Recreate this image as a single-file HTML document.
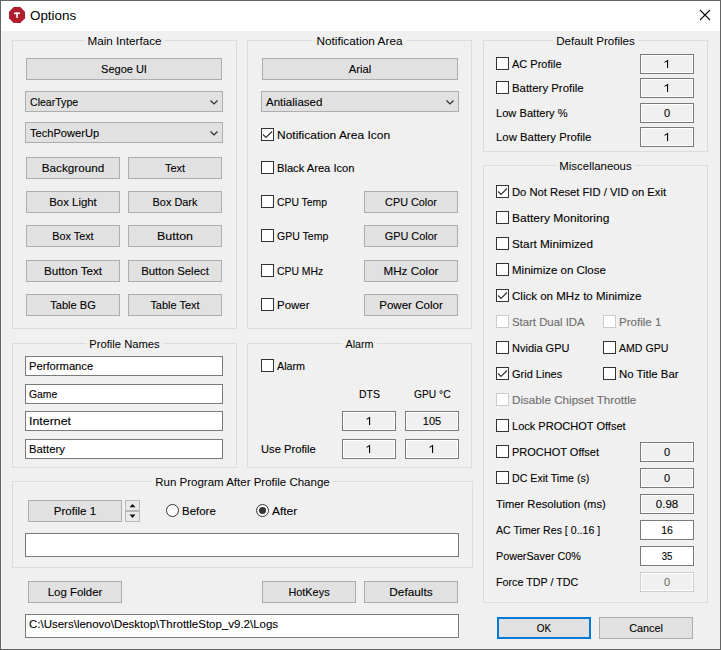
<!DOCTYPE html><html><head><meta charset="utf-8"><style>
*{margin:0;padding:0;box-sizing:border-box}
html,body{width:721px;height:650px;overflow:hidden;background:#f0f0f0}
body{position:relative;font-family:"Liberation Sans",sans-serif;font-size:12px}
#win{position:absolute;left:0;top:0;width:721px;height:650px;border:1px solid #646464;background:#f0f0f0}
.title{position:absolute;left:1px;top:1px;width:719px;height:30px;background:#fff}
.ab{position:absolute}
.t{position:absolute;font-size:11px;line-height:14px;white-space:nowrap;color:#000;transform-origin:0 0;-webkit-text-stroke:0.1px #000}
.c{transform-origin:50% 0}
.c{text-align:center}
.dt{color:#6d6d6d;-webkit-text-stroke:0.1px #6d6d6d}
.dt2{color:#6d6d6d;-webkit-text-stroke:0.1px #6d6d6d}
.grp{position:absolute;border:1px solid #dcdcdc}
.gt{position:absolute;text-align:center;font-size:11px;line-height:14px;white-space:nowrap;transform-origin:50% 0}
.gt span{background:#f0f0f0;padding:0 3px}
.btn{position:absolute;background:#e1e1e1;border:1px solid #adadad}
.ok{border:2px solid #0078d7}
.chk{position:absolute;background:#fff;border:1px solid #333}
.chk.dis{border-color:#cccccc;background:#fff}
.edit{position:absolute;background:#fff;border:1px solid #7a7a7a}
.stat{position:absolute;background:#f0f0f0;border:1px solid #7a7a7a;box-shadow:inset 0 0 0 1px #fff}
.fdis{position:absolute;background:#f0f0f0;border:1px solid #cccccc;box-shadow:inset 0 0 0 1px #fff}
.spin{position:absolute;background:#e9e9e9;border:1px solid #b9b9b9}
.radio{position:absolute;width:13px;height:13px;border:1px solid #333;border-radius:50%;background:#fff}
.radio .dot{position:absolute;left:2px;top:2px;width:7px;height:7px;border-radius:50%;background:#333}
</style></head><body><div id="win"></div><div class="title"></div>
<svg class="ab" style="left:9px;top:7px" width="16" height="16" viewBox="0 0 16 16"><polygon points="4.7,0 11.3,0 16,4.7 16,11.3 11.3,16 4.7,16 0,11.3 0,4.7" fill="#b01e2e"/><rect x="5" y="5.5" width="6" height="1.6" fill="#fff"/><rect x="7.2" y="5.5" width="1.6" height="5.4" fill="#fff"/></svg>
<div class="t" style="left:30px;top:8px;font-size:13px;line-height:16px;transform:scaleX(1.03);-webkit-text-stroke:0">Options</div>
<svg class="ab" style="left:699px;top:9px" width="12" height="12"><path d="M1,1 L11,11 M11,1 L1,11" stroke="#111" stroke-width="1.1"/></svg>
<div class="grp" style="left:12px;top:40px;width:225px;height:289px;"></div>
<div class="gt" style="left:12px;width:225px;top:34px;transform:scaleX(1.0609);"><span style="">Main Interface</span></div>
<div class="btn" style="left:26px;top:58px;width:196px;height:22px;"></div>
<div class="t c " style="left:26px;width:196px;top:62px;transform:scaleX(1.0000);">Segoe UI</div>
<div class="btn" style="left:25px;top:91px;width:198px;height:21px;"></div>
<div class="t " style="left:30px;top:95px;transform:scaleX(0.9600);">ClearType</div>
<svg class="ab" style="left:209px;top:98px" width="12" height="9"><polyline points="1.5,2.5 5,5.9 8.5,2.5" fill="none" stroke="#333" stroke-width="1.3"/></svg>
<div class="btn" style="left:25px;top:122px;width:198px;height:21px;"></div>
<div class="t " style="left:30px;top:126px;transform:scaleX(1.0088);">TechPowerUp</div>
<svg class="ab" style="left:209px;top:129px" width="12" height="9"><polyline points="1.5,2.5 5,5.9 8.5,2.5" fill="none" stroke="#333" stroke-width="1.3"/></svg>
<div class="btn" style="left:26px;top:157px;width:94px;height:22px;"></div>
<div class="t c " style="left:26px;width:94px;top:161px;transform:scaleX(1.0621);">Background</div>
<div class="btn" style="left:128px;top:157px;width:94px;height:22px;"></div>
<div class="t c " style="left:128px;width:94px;top:161px;transform:scaleX(1.0000);">Text</div>
<div class="btn" style="left:26px;top:191px;width:94px;height:22px;"></div>
<div class="t c " style="left:26px;width:94px;top:195px;transform:scaleX(1.0356);">Box Light</div>
<div class="btn" style="left:128px;top:191px;width:94px;height:22px;"></div>
<div class="t c " style="left:128px;width:94px;top:195px;transform:scaleX(0.9911);">Box Dark</div>
<div class="btn" style="left:26px;top:225px;width:94px;height:22px;"></div>
<div class="t c " style="left:26px;width:94px;top:229px;transform:scaleX(0.9829);">Box Text</div>
<div class="btn" style="left:128px;top:225px;width:94px;height:22px;"></div>
<div class="t c " style="left:128px;width:94px;top:229px;transform:scaleX(1.1290);">Button</div>
<div class="btn" style="left:26px;top:260px;width:94px;height:22px;"></div>
<div class="t c " style="left:26px;width:94px;top:264px;transform:scaleX(1.0611);">Button Text</div>
<div class="btn" style="left:128px;top:260px;width:94px;height:22px;"></div>
<div class="t c " style="left:128px;width:94px;top:264px;transform:scaleX(1.0338);">Button Select</div>
<div class="btn" style="left:26px;top:294px;width:94px;height:22px;"></div>
<div class="t c " style="left:26px;width:94px;top:298px;transform:scaleX(1.0068);">Table BG</div>
<div class="btn" style="left:128px;top:294px;width:94px;height:22px;"></div>
<div class="t c " style="left:128px;width:94px;top:298px;transform:scaleX(0.9980);">Table Text</div>
<div class="grp" style="left:247px;top:40px;width:225px;height:289px;"></div>
<div class="gt" style="left:247px;width:225px;top:34px;transform:scaleX(1.0750);"><span style="">Notification Area</span></div>
<div class="btn" style="left:262px;top:58px;width:196px;height:22px;"></div>
<div class="t c " style="left:262px;width:196px;top:62px;transform:scaleX(1.0227);">Arial</div>
<div class="btn" style="left:261px;top:91px;width:198px;height:21px;"></div>
<div class="t " style="left:266px;top:95px;transform:scaleX(1.0481);">Antialiased</div>
<svg class="ab" style="left:445px;top:98px" width="12" height="9"><polyline points="1.5,2.5 5,5.9 8.5,2.5" fill="none" stroke="#333" stroke-width="1.3"/></svg>
<div class="chk" style="left:261px;top:128px;width:13px;height:13px;"><svg width="13" height="13" style="position:absolute;left:-1px;top:-1px"><polyline points="2,6.5 5,9.5 11,3.5" fill="none" stroke="#333" stroke-width="1.2"/></svg></div>
<div class="t " style="left:277px;top:128px;transform:scaleX(1.0882);">Notification Area Icon</div>
<div class="chk" style="left:261px;top:161px;width:13px;height:13px;"></div>
<div class="t " style="left:277px;top:161px;transform:scaleX(1.0133);">Black Area Icon</div>
<div class="chk" style="left:261px;top:195px;width:13px;height:13px;"></div>
<div class="t " style="left:277px;top:195px;transform:scaleX(0.9434);">CPU Temp</div>
<div class="btn" style="left:364px;top:191px;width:94px;height:22px;"></div>
<div class="t c " style="left:364px;width:94px;top:195px;transform:scaleX(0.9846);">CPU Color</div>
<div class="chk" style="left:261px;top:229px;width:13px;height:13px;"></div>
<div class="t " style="left:277px;top:229px;transform:scaleX(0.9566);">GPU Temp</div>
<div class="btn" style="left:364px;top:225px;width:94px;height:22px;"></div>
<div class="t c " style="left:364px;width:94px;top:229px;transform:scaleX(0.9906);">GPU Color</div>
<div class="chk" style="left:261px;top:264px;width:13px;height:13px;"></div>
<div class="t " style="left:277px;top:264px;transform:scaleX(0.9449);">CPU MHz</div>
<div class="btn" style="left:364px;top:260px;width:94px;height:22px;"></div>
<div class="t c " style="left:364px;width:94px;top:264px;transform:scaleX(1.0588);">MHz Color</div>
<div class="chk" style="left:261px;top:298px;width:13px;height:13px;"></div>
<div class="t " style="left:277px;top:298px;transform:scaleX(1.0433);">Power</div>
<div class="btn" style="left:364px;top:294px;width:94px;height:22px;"></div>
<div class="t c " style="left:364px;width:94px;top:298px;transform:scaleX(1.0500);">Power Color</div>
<div class="grp" style="left:483px;top:40px;width:225px;height:112px;"></div>
<div class="gt" style="left:483px;width:225px;top:34px;transform:scaleX(1.0541);"><span style="">Default Profiles</span></div>
<div class="chk" style="left:496px;top:57px;width:13px;height:13px;"></div>
<div class="t " style="left:512px;top:57px;transform:scaleX(1.0000);">AC Profile</div>
<div class="stat" style="left:640px;top:54px;width:54px;height:20px;"></div>
<svg class="ab" style="left:664px;top:60px" width="5" height="8"><rect x="3" y="0" width="1.1" height="8" fill="#000"/><path d="M0.6,2.4 L3.4,0.6" stroke="#000" stroke-width="1.1"/></svg>
<div class="chk" style="left:496px;top:81px;width:13px;height:13px;"></div>
<div class="t " style="left:512px;top:81px;transform:scaleX(1.0353);">Battery Profile</div>
<div class="stat" style="left:640px;top:78px;width:54px;height:20px;"></div>
<svg class="ab" style="left:664px;top:84px" width="5" height="8"><rect x="3" y="0" width="1.1" height="8" fill="#000"/><path d="M0.6,2.4 L3.4,0.6" stroke="#000" stroke-width="1.1"/></svg>
<div class="t " style="left:496px;top:106px;transform:scaleX(1.0100);">Low Battery %</div>
<div class="stat" style="left:640px;top:103px;width:54px;height:20px;"></div>
<div class="t c " style="left:640px;width:54px;top:106px;">0</div>
<div class="t " style="left:496px;top:130px;transform:scaleX(1.0330);">Low Battery Profile</div>
<div class="stat" style="left:640px;top:127px;width:54px;height:20px;"></div>
<svg class="ab" style="left:664px;top:133px" width="5" height="8"><rect x="3" y="0" width="1.1" height="8" fill="#000"/><path d="M0.6,2.4 L3.4,0.6" stroke="#000" stroke-width="1.1"/></svg>
<div class="grp" style="left:483px;top:165px;width:225px;height:438px;"></div>
<div class="gt" style="left:483px;width:225px;top:159px;transform:scaleX(1.0377);"><span style="">Miscellaneous</span></div>
<div class="chk" style="left:496px;top:185px;width:13px;height:13px;"><svg width="13" height="13" style="position:absolute;left:-1px;top:-1px"><polyline points="2,6.5 5,9.5 11,3.5" fill="none" stroke="#333" stroke-width="1.2"/></svg></div>
<div class="t " style="left:512px;top:185px;transform:scaleX(1.0200);">Do Not Reset FID / VID on Exit</div>
<div class="chk" style="left:496px;top:211px;width:13px;height:13px;"></div>
<div class="t " style="left:512px;top:211px;transform:scaleX(1.0909);">Battery Monitoring</div>
<div class="chk" style="left:496px;top:237px;width:13px;height:13px;"></div>
<div class="t " style="left:512px;top:237px;transform:scaleX(1.0676);">Start Minimized</div>
<div class="chk" style="left:496px;top:263px;width:13px;height:13px;"></div>
<div class="t " style="left:512px;top:263px;transform:scaleX(1.0449);">Minimize on Close</div>
<div class="chk" style="left:496px;top:289px;width:13px;height:13px;"><svg width="13" height="13" style="position:absolute;left:-1px;top:-1px"><polyline points="2,6.5 5,9.5 11,3.5" fill="none" stroke="#333" stroke-width="1.2"/></svg></div>
<div class="t " style="left:512px;top:289px;transform:scaleX(1.0488);">Click on MHz to Minimize</div>
<div class="chk dis" style="left:496px;top:315px;width:13px;height:13px;"></div>
<div class="t dt" style="left:512px;top:315px;transform:scaleX(1.0333);">Start Dual IDA</div>
<div class="chk dis" style="left:603px;top:315px;width:13px;height:13px;"></div>
<div class="t dt" style="left:619px;top:315px;transform:scaleX(1.0513);">Profile 1</div>
<div class="chk" style="left:496px;top:341px;width:13px;height:13px;"></div>
<div class="t " style="left:512px;top:341px;transform:scaleX(1.0000);">Nvidia GPU</div>
<div class="chk" style="left:603px;top:341px;width:13px;height:13px;"></div>
<div class="t " style="left:619px;top:341px;transform:scaleX(0.9608);">AMD GPU</div>
<div class="chk" style="left:496px;top:367px;width:13px;height:13px;"><svg width="13" height="13" style="position:absolute;left:-1px;top:-1px"><polyline points="2,6.5 5,9.5 11,3.5" fill="none" stroke="#333" stroke-width="1.2"/></svg></div>
<div class="t " style="left:512px;top:367px;transform:scaleX(1.0000);">Grid Lines</div>
<div class="chk" style="left:603px;top:367px;width:13px;height:13px;"></div>
<div class="t " style="left:619px;top:367px;transform:scaleX(1.0357);">No Title Bar</div>
<div class="chk dis" style="left:496px;top:393px;width:13px;height:13px;"></div>
<div class="t dt" style="left:512px;top:393px;transform:scaleX(1.0603);">Disable Chipset Throttle</div>
<div class="chk" style="left:496px;top:419px;width:13px;height:13px;"></div>
<div class="t " style="left:512px;top:419px;transform:scaleX(1.0027);">Lock PROCHOT Offset</div>
<div class="chk" style="left:496px;top:445px;width:13px;height:13px;"></div>
<div class="t " style="left:512px;top:445px;transform:scaleX(1.0000);">PROCHOT Offset</div>
<div class="stat" style="left:640px;top:442px;width:54px;height:20px;"></div>
<div class="t c " style="left:640px;width:54px;top:445px;">0</div>
<div class="chk" style="left:496px;top:471px;width:13px;height:13px;"></div>
<div class="t " style="left:512px;top:471px;transform:scaleX(0.9658);">DC Exit Time (s)</div>
<div class="stat" style="left:640px;top:468px;width:54px;height:20px;"></div>
<div class="t c " style="left:640px;width:54px;top:471px;">0</div>
<div class="t " style="left:496px;top:497px;transform:scaleX(1.0187);">Timer Resolution (ms)</div>
<div class="stat" style="left:640px;top:494px;width:54px;height:20px;"></div>
<div class="t c " style="left:640px;width:54px;top:497px;transform:scaleX(1.0500);">0.98</div>
<div class="t " style="left:496px;top:523px;transform:scaleX(0.9630);">AC Timer Res [ 0..16 ]</div>
<div class="edit" style="left:640px;top:520px;width:54px;height:20px;"></div>
<div class="t c " style="left:640px;width:54px;top:523px;transform:scaleX(0.9545);">16</div>
<div class="t " style="left:496px;top:549px;transform:scaleX(0.9767);">PowerSaver C0%</div>
<div class="edit" style="left:640px;top:546px;width:54px;height:20px;"></div>
<div class="t c " style="left:640px;width:54px;top:549px;transform:scaleX(0.8750);">35</div>
<div class="t " style="left:496px;top:575px;transform:scaleX(0.9759);">Force TDP / TDC</div>
<div class="fdis" style="left:640px;top:572px;width:54px;height:20px;"></div>
<div class="t c dt2" style="left:640px;width:54px;top:575px;">0</div>
<div class="grp" style="left:12px;top:343px;width:225px;height:125px;"></div>
<div class="gt" style="left:12px;width:225px;top:337px;transform:scaleX(1.0191);"><span style="">Profile Names</span></div>
<div class="edit" style="left:25px;top:356px;width:198px;height:20px;"></div>
<div class="t " style="left:29px;top:359px;transform:scaleX(1.0194);">Performance</div>
<div class="edit" style="left:25px;top:384px;width:198px;height:20px;"></div>
<div class="t " style="left:29px;top:387px;transform:scaleX(0.9433);">Game</div>
<div class="edit" style="left:25px;top:411px;width:198px;height:20px;"></div>
<div class="t " style="left:29px;top:414px;transform:scaleX(1.1278);">Internet</div>
<div class="edit" style="left:25px;top:439px;width:198px;height:20px;"></div>
<div class="t " style="left:29px;top:442px;transform:scaleX(1.0294);">Battery</div>
<div class="grp" style="left:247px;top:343px;width:225px;height:125px;"></div>
<div class="gt" style="left:247px;width:225px;top:337px;transform:scaleX(0.9759);"><span style="">Alarm</span></div>
<div class="chk" style="left:261px;top:359px;width:13px;height:13px;"></div>
<div class="t " style="left:277px;top:359px;transform:scaleX(0.9759);">Alarm</div>
<div class="t " style="left:359px;top:387px;transform:scaleX(0.9524);">DTS</div>
<div class="t " style="left:414px;top:387px;transform:scaleX(0.9333);">GPU °C</div>
<div class="stat" style="left:342px;top:411px;width:54px;height:20px;"></div>
<svg class="ab" style="left:366px;top:417px" width="5" height="8"><rect x="3" y="0" width="1.1" height="8" fill="#000"/><path d="M0.6,2.4 L3.4,0.6" stroke="#000" stroke-width="1.1"/></svg>
<div class="stat" style="left:405px;top:411px;width:54px;height:20px;"></div>
<div class="t c " style="left:405px;width:54px;top:414px;">105</div>
<div class="t " style="left:261px;top:442px;transform:scaleX(1.0189);">Use Profile</div>
<div class="stat" style="left:342px;top:439px;width:54px;height:20px;"></div>
<svg class="ab" style="left:366px;top:445px" width="5" height="8"><rect x="3" y="0" width="1.1" height="8" fill="#000"/><path d="M0.6,2.4 L3.4,0.6" stroke="#000" stroke-width="1.1"/></svg>
<div class="stat" style="left:405px;top:439px;width:54px;height:20px;"></div>
<svg class="ab" style="left:429px;top:445px" width="5" height="8"><rect x="3" y="0" width="1.1" height="8" fill="#000"/><path d="M0.6,2.4 L3.4,0.6" stroke="#000" stroke-width="1.1"/></svg>
<div class="grp" style="left:12px;top:481px;width:461px;height:87px;"></div>
<div class="gt" style="left:12px;width:461px;top:475px;transform:scaleX(1.0446);"><span style="">Run Program After Profile Change</span></div>
<div class="btn" style="left:28px;top:500px;width:94px;height:22px;"></div>
<div class="t c " style="left:28px;width:94px;top:504px;transform:scaleX(1.0513);">Profile 1</div>
<div class="spin" style="left:125px;top:500px;width:15px;height:11px;"></div>
<div class="spin" style="left:125px;top:511px;width:15px;height:11px;"></div>
<svg class="ab" style="left:125px;top:500px" width="15" height="22"><polygon points="4.5,7.3 7.5,4 10.5,7.3" fill="#111"/><polygon points="4.5,14.6 10.5,14.6 7.5,17.9" fill="#111"/></svg>
<div class="radio" style="left:166px;top:504px"></div>
<div class="t " style="left:182px;top:504px;transform:scaleX(1.0419);">Before</div>
<div class="radio" style="left:256px;top:504px"><div class="dot"></div></div>
<div class="t " style="left:272px;top:504px;transform:scaleX(1.0870);">After</div>
<div class="edit" style="left:25px;top:533px;width:434px;height:24px;"></div>
<div class="t " style="left:29px;top:536px;"></div>
<div class="btn" style="left:28px;top:581px;width:94px;height:22px;"></div>
<div class="t c " style="left:28px;width:94px;top:585px;transform:scaleX(1.0377);">Log Folder</div>
<div class="btn" style="left:262px;top:581px;width:94px;height:22px;"></div>
<div class="t c " style="left:262px;width:94px;top:585px;transform:scaleX(0.9902);">HotKeys</div>
<div class="btn" style="left:364px;top:581px;width:94px;height:22px;"></div>
<div class="t c " style="left:364px;width:94px;top:585px;transform:scaleX(1.0750);">Defaults</div>
<div class="edit" style="left:25px;top:614px;width:434px;height:24px;"></div>
<div class="t " style="left:29px;top:617px;transform:scaleX(1.0445);">C:\Users\lenovo\Desktop\ThrottleStop_v9.2\Logs</div>
<div class="btn ok" style="left:497px;top:617px;width:94px;height:22px;"></div>
<div class="t c " style="left:497px;width:94px;top:621px;transform:scaleX(0.9000);">OK</div>
<div class="btn" style="left:599px;top:617px;width:94px;height:22px;"></div>
<div class="t c " style="left:599px;width:94px;top:621px;transform:scaleX(0.9824);">Cancel</div></body></html>
